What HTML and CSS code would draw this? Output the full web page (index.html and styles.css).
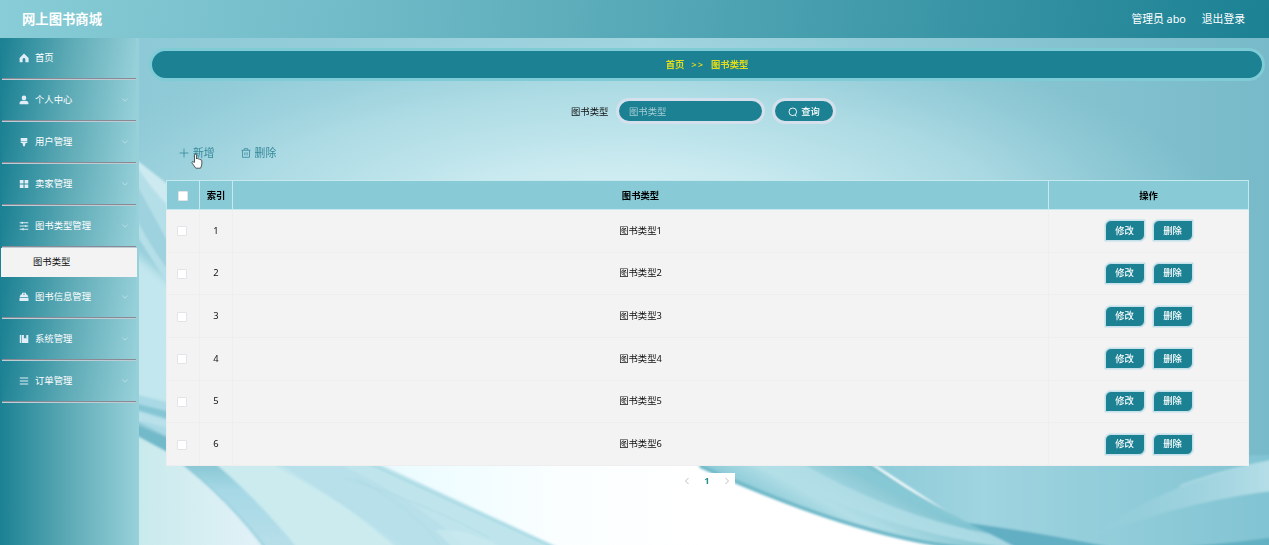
FILE: index.html
```html
<!DOCTYPE html>
<html lang="zh-CN">
<head>
<meta charset="utf-8">
<title>网上图书商城</title>
<link rel="stylesheet" href="styles.css">
</head>
<body>
<header class="topbar">
  <h1 class="brand">网上图书商城</h1>
  <nav class="account"><span>管理员 abo</span><span>退出登录</span></nav>
</header>
<div class="shell">
  <aside class="sidebar">
    <div class="item"><svg class="ico" viewBox="0 0 10 10"><path d="M5 .6 9.6 5v4.2H6.4V6.5a1.4 1.4 0 0 0-2.8 0v2.7H.6V5z"/></svg><span>首页</span></div>
    <div class="item"><svg class="ico" viewBox="0 0 10 10"><circle cx="5" cy="2.9" r="2.3"/><path d="M.6 9.2V8c0-1.6 1.4-2.3 3-2.3h2.8c1.6 0 3 .7 3 2.3v1.2z"/></svg><span>个人中心</span><svg class="arrow" viewBox="0 0 8 8"><path d="M1.3 2.5 4 5.2l2.7-2.7"/></svg></div>
    <div class="item"><svg class="ico" viewBox="0 0 10 10"><path d="M1.7 1h6.6v3.5H1.7zM1.7 5.1h6.6v1H6.6L5.8 9.3H4.2l-.8-3.2H1.7z"/></svg><span>用户管理</span><svg class="arrow" viewBox="0 0 8 8"><path d="M1.3 2.5 4 5.2l2.7-2.7"/></svg></div>
    <div class="item"><svg class="ico" viewBox="0 0 10 10"><path d="M.8 1h3.7v3.5H.8zM5.6 1h3.7v3.5H5.6zM.8 5.5h3.7V9H.8zM5.6 5.5h3.7V9H5.6z"/></svg><span>卖家管理</span><svg class="arrow" viewBox="0 0 8 8"><path d="M1.3 2.5 4 5.2l2.7-2.7"/></svg></div>
    <div class="item"><svg class="ico line" viewBox="0 0 10 10"><path d="M.7 1.8h8.6M.7 5h8.6M.7 8.2h8.6M3.2.7v2.2M6.8 3.9v2.2M4 7.1v2.2"/></svg><span>图书类型管理</span><svg class="arrow" viewBox="0 0 8 8"><path d="M1.3 2.5 4 5.2l2.7-2.7"/></svg></div>
    <div class="subitem">图书类型</div>
    <div class="item"><svg class="ico" viewBox="0 0 10 10"><path d="M3 2.5V.8h4v1.7h1.3L9.4 5H.6l1.1-2.5zM4 1.7v.8h2v-.8zM.5 5.8h9v3.3h-9z"/></svg><span>图书信息管理</span><svg class="arrow" viewBox="0 0 8 8"><path d="M1.3 2.5 4 5.2l2.7-2.7"/></svg></div>
    <div class="item"><svg class="ico" viewBox="0 0 10 10"><path d="M.8 1h1.5v8H.8zM2.9 1h2v3.8l1.2-1 1.2 1V1h2v8H2.9z"/></svg><span>系统管理</span><svg class="arrow" viewBox="0 0 8 8"><path d="M1.3 2.5 4 5.2l2.7-2.7"/></svg></div>
    <div class="item"><svg class="ico line" viewBox="0 0 10 10"><path d="M.8 2h8.4M.8 5h8.4M.8 8h8.4"/></svg><span>订单管理</span><svg class="arrow" viewBox="0 0 8 8"><path d="M1.3 2.5 4 5.2l2.7-2.7"/></svg></div>
  </aside>
  <main class="content">
    <svg class="backdrop" viewBox="139 38 1130 507" preserveAspectRatio="none">
      <defs>
        <linearGradient id="base" x1="0" y1="0" x2="1" y2="0"><stop offset="0" stop-color="#8dc9d6"/><stop offset=".45" stop-color="#a0d4de"/><stop offset="1" stop-color="#78bac9"/></linearGradient>
        <radialGradient id="glow" gradientUnits="userSpaceOnUse" cx="0" cy="0" r="1" gradientTransform="translate(620 215) scale(600 185)"><stop offset="0" stop-color="#dbf3f6"/><stop offset=".3" stop-color="#cdecf1" stop-opacity=".9"/><stop offset=".65" stop-color="#b9e2ea" stop-opacity=".65"/><stop offset="1" stop-color="#a0d5df" stop-opacity="0"/></radialGradient>
        <linearGradient id="low" gradientUnits="userSpaceOnUse" x1="139" y1="0" x2="700" y2="0"><stop offset="0" stop-color="#c9eaec"/><stop offset=".2" stop-color="#e0f1f7"/><stop offset=".5" stop-color="#edfcff"/><stop offset=".75" stop-color="#fafeff"/><stop offset="1" stop-color="#fff"/></linearGradient>
        <linearGradient id="edge" x1="0" y1="0" x2="0" y2="1"><stop offset="0" stop-color="#7fc1cf"/><stop offset=".35" stop-color="#a6d8e5"/><stop offset="1" stop-color="#b9e0ea"/></linearGradient>
        <linearGradient id="right" gradientUnits="userSpaceOnUse" x1="860" y1="0" x2="1269" y2="0"><stop offset="0" stop-color="#8bcad7"/><stop offset=".3" stop-color="#9fd4e0"/><stop offset="1" stop-color="#82c4d3"/></linearGradient>
        <linearGradient id="ribbon" gradientUnits="userSpaceOnUse" x1="800" y1="520" x2="840" y2="450"><stop offset="0" stop-color="#8bcad7"/><stop offset=".35" stop-color="#b3dfe7"/><stop offset="1" stop-color="#7dc1cf"/></linearGradient>
        <linearGradient id="shine" x1="0" y1="0" x2="1" y2="0"><stop offset="0" stop-color="#a4d6e1" stop-opacity="0"/><stop offset="1" stop-color="#b9e0e9"/></linearGradient>
        <filter id="soft"><feGaussianBlur stdDeviation="1"/></filter>
        <filter id="softer" x="-20%" y="-20%" width="140%" height="140%"><feGaussianBlur stdDeviation="4"/></filter>
      </defs>
      <path fill="url(#base)" d="M139 38h1130v507H139z"/>
      <path fill="url(#glow)" d="M139 38h1130v507H139z"/>
      <path fill="#c3e7ee" filter="url(#softer)" d="M125 245 180 290V420L125 405z"/>
      <path fill="url(#low)" d="M139 430 190 455H1000V545H139z"/>
      <g filter="url(#soft)">
        <path fill="#b5dfe8" d="M130 155 175 190V295L130 225z"/>
        <path fill="#9dd2de" d="M130 172Q153 215 175 255V278Q150 249 130 205z"/>
        <path fill="#cdeaf1" d="M130 155Q150 190 175 212V190z"/>
        <path fill="#a9d9e5" d="M130 393 175 404V440L130 418z"/>
        <path fill="#86c6d4" d="M130 402 175 413V421L130 408z"/>
        <path fill="#b9e1ea" d="M130 409 175 423V430L130 418z"/>
        <path fill="#72b9c9" d="M130 422 175 441V456L130 432z"/>
        <path fill="#cbebef" d="M180 455H300Q370 490 410 555H270Q240 505 180 455z"/>
        <path fill="url(#edge)" d="M170 455H205Q255 495 303 555H268Q230 500 170 455z"/>
        <path fill="none" stroke="#8bc5d4" d="M178 460Q230 500 268 550"/>
        <path fill="#bfe4ec" d="M255 455H360L575 555H415Q350 505 255 455z"/>
        <path fill="#b3deea" d="M265 455H320Q420 500 475 555H405Q350 505 265 455z" opacity=".7"/>
        <path fill="none" stroke="#a9d8e2" stroke-width=".8" d="M355 478Q410 505 440 545M345 478Q430 505 490 538"/>
        <path fill="none" stroke="#a8dae4" stroke-width="2" d="M368 463 555 548"/>
        <path fill="#cdebf0" d="M435 530Q470 528 505 550H455z" opacity=".6"/>
        <path fill="url(#right)" d="M860 455H1280V555H1020L960 520z"/>
        <path fill="url(#ribbon)" d="M685 458H862Q920 500 975 526L1030 553H990Q880 542 700 466z"/>
        <path fill="none" stroke="#70b9c9" stroke-width="4" d="M700 466Q870 543 980 549"/>
        <path fill="#b3dfe7" d="M745 462H800Q890 515 990 534L1020 549Q890 535 745 462z" opacity=".8"/>
        <path fill="#87c8d5" d="M850 458Q910 490 972 526 920 512 835 460z"/>
        <path fill="#62afc3" d="M968 523Q1040 532 1150 555H1030Q1000 538 968 523z"/>
        <path fill="url(#shine)" d="M1095 535Q1170 478 1280 459V490Q1190 500 1095 535z"/>
        <path fill="none" stroke="#b9e1e9" stroke-width="2" d="M1180 486Q1225 469 1275 460" opacity=".6"/>
        <path fill="#62b0c2" d="M1145 549Q1220 545 1275 537V555z"/>
      </g>
    </svg>
    <div class="crumbs"><span>首页</span><span class="sep">&gt;&gt;</span><span>图书类型</span></div>
    <div class="search">
      <label>图书类型</label>
      <input class="field" type="text" placeholder="图书类型">
      <button class="query"><svg viewBox="0 0 10 10"><circle cx="4.8" cy="4.8" r="3.8"/><path d="m7 8 1.5 1.3"/></svg>查询</button>
    </div>
    <div class="tools">
      <span class="tool"><svg viewBox="0 0 10 10"><path d="M5 .5v9M.5 5h9"/></svg>新增</span>
      <span class="tool"><svg viewBox="0 0 10 10"><path d="M.5 2.3h9M3.2 2V.7h3.6V2M1.5 2.5v6.8h7V2.5M3.9 4.3v3M6.1 4.3v3"/></svg>删除</span>
      <svg class="pointer" viewBox="0 0 12 16"><path d="M3.5 9V2.2a1 1 0 0 1 2 0V6l.2-.5q1.2-.6 1.7.6 1.2-.5 1.7.6 1.5-.3 1.7 1v3.2q0 2-1.3 4.3H4.8L1.2 10.2Q.5 9 1.6 8.5q.8-.2 1.9 1.5"/></svg>
    </div>
    <table class="grid">
      <colgroup><col class="c1"><col class="c2"><col><col class="c4"></colgroup>
      <thead><tr><th><i class="box"></i></th><th>索引</th><th>图书类型</th><th>操作</th></tr></thead>
      <tbody>
        <tr><td><i class="box"></i></td><td>1</td><td>图书类型1</td><td><button class="act">修改</button><button class="act">删除</button></td></tr>
        <tr><td><i class="box"></i></td><td>2</td><td>图书类型2</td><td><button class="act">修改</button><button class="act">删除</button></td></tr>
        <tr><td><i class="box"></i></td><td>3</td><td>图书类型3</td><td><button class="act">修改</button><button class="act">删除</button></td></tr>
        <tr><td><i class="box"></i></td><td>4</td><td>图书类型4</td><td><button class="act">修改</button><button class="act">删除</button></td></tr>
        <tr><td><i class="box"></i></td><td>5</td><td>图书类型5</td><td><button class="act">修改</button><button class="act">删除</button></td></tr>
        <tr><td><i class="box"></i></td><td>6</td><td>图书类型6</td><td><button class="act">修改</button><button class="act">删除</button></td></tr>
      </tbody>
    </table>
    <div class="pager">
      <svg viewBox="0 0 8 8"><path d="M5.5 1 2.5 4l3 3"/></svg><b>1</b><svg viewBox="0 0 8 8"><path d="m2.5 1 3 3-3 3"/></svg>
    </div>
  </main>
</div>
</body>
</html>
```
FILE: styles.css
```css
* { box-sizing: border-box; }
body {
  margin: 0;
  width: 1269px;
  height: 545px;
  overflow: hidden;
  font: 9.33px/14px "Noto Sans", "Noto Sans CJK SC", sans-serif;
  color: #111;
}
button, input { font: inherit; border: 0; padding: 0; margin: 0; }

.topbar {
  height: 38px;
  display: flex;
  align-items: center;
  justify-content: space-between;
  padding: 0 24px 0 22px;
  color: #fff;
  background: linear-gradient(100deg, #88cdd7, #6fb9c6 30%, #1b8193);
}
.brand { margin: 0; font-size: 13.33px; line-height: 20px; font-weight: 700; }
.account { display: flex; gap: 16px; font-size: 10.8px; }

.shell { display: flex; height: 507px; }
.sidebar {
  width: 139px;
  flex: none;
  background: linear-gradient(90deg, #1b8193, #5eabb6 50%, #98d1da);
}
.item {
  height: 42px;
  margin: 0 3px 0 2px;
  padding: 1px 7px 2px 17px;
  display: flex;
  align-items: center;
  color: #fff;
  border-bottom: 1px solid #bccdd5;
  box-shadow: inset 0 -1px #8b8993;
  background: linear-gradient(100deg, #1b8193, #5eabb6 50%, #98d1da);
}
.ico { width: 10px; height: 10px; margin-right: 6px; fill: #e1edf8; fill-rule: evenodd; }
.ico.line { fill: none; stroke: #e1edf8; stroke-width: 1.1; }
.arrow { width: 8px; height: 8px; margin-left: auto; fill: none; stroke: #c4e5eb; stroke-width: .8; }
.subitem {
  height: 29px;
  margin: 0 2px 0 1px;
  padding: 7px 0 0 32px;
  background: #f3f3f3;
}

.content {
  position: relative;
  flex: 1;
  min-width: 0;
  display: flex;
  flex-direction: column;
  padding: 10px 7px 0 13px;
}
.backdrop { position: absolute; inset: 0; width: 100%; height: 100%; z-index: -1; }
.crumbs {
  height: 33px;
  display: flex;
  justify-content: center;
  align-items: center;
  gap: 7px;
  margin: 0 -3px;
  border: 3px solid #7fcbd6;
  border-radius: 17px;
  background: #1b8193;
  color: #e2dc1b;
  font-weight: 600;
}
.sep { letter-spacing: 1px; }
.search { display: flex; align-items: center; height: 26px; margin: 17px 0 0 419px; }
.search label { width: 45px; padding-top: 1px; }
.field, .query {
  height: 26px;
  border: 3px solid #d4e1ec;
  border-radius: 13px;
  background: #1b8193;
  color: #fff;
}
.field { width: 149px; padding-left: 10px; }
.field::placeholder { color: #a5ccd4; opacity: 1; }
.query { width: 64px; margin-left: 7px; padding-top: 1px; display: flex; align-items: center; justify-content: center; gap: 3px; font-weight: 500; }
.query svg { width: 10px; height: 10px; fill: none; stroke: #fff; stroke-width: .9; }

.tools { position: relative; display: flex; gap: 26px; margin: 22px 0 0 27px; color: #36889a; font-size: 10.8px; line-height: 14px; }
.tool { display: flex; align-items: center; gap: 4px; }
.tool svg { width: 10px; height: 10px; fill: none; stroke: currentColor; stroke-width: .8; }
.tools .pointer { position: absolute; left: 12px; top: 7px; width: 12px; height: 16px; fill: #fff; stroke: #333; stroke-width: .8; }

.grid {
  width: 1083px;
  height: 286px;
  margin: 20px 0 0 14px;
  border-collapse: collapse;
  table-layout: fixed;
  background: #f3f3f3;
  text-align: center;
}
.c1 { width: 33px; }
.c2 { width: 33px; }
.c4 { width: 200px; }
th, td { padding: 0; border: 1px solid #eee; }
th { height: 29px; padding-top: 1px; background: #88cad5; border-color: #c6e9ef; font-weight: 700; color: #000; }
td { height: 42.5px; padding-top: 0; }
th:nth-child(1), td:nth-child(1) { padding-right: 1px; }
.box { display: inline-block; width: 10px; height: 10px; vertical-align: middle; background: #fff; border: 1px solid #e2e4e8; border-radius: 1px; }
td .box { margin-right: 1px; }
.act {
  width: 40px;
  height: 21px;
  margin: 0 4px;
  border: 1px solid #c6e1e9;
  border-radius: 6px 1px 6px 1px;
  background: #1b8193;
  box-shadow: 0 0 1px 1px #d5e7ef;
  color: #fff;
  font-weight: 500;
}
.pager {
  width: 56px;
  height: 15px;
  margin: 7px 0 0 527px;
  padding: 0 4px;
  display: flex;
  align-items: center;
  justify-content: space-between;
  background: #fff;
  color: #27908f;
}
.pager svg { width: 8px; height: 8px; fill: none; stroke: #b3b8bf; stroke-width: .9; }
```
